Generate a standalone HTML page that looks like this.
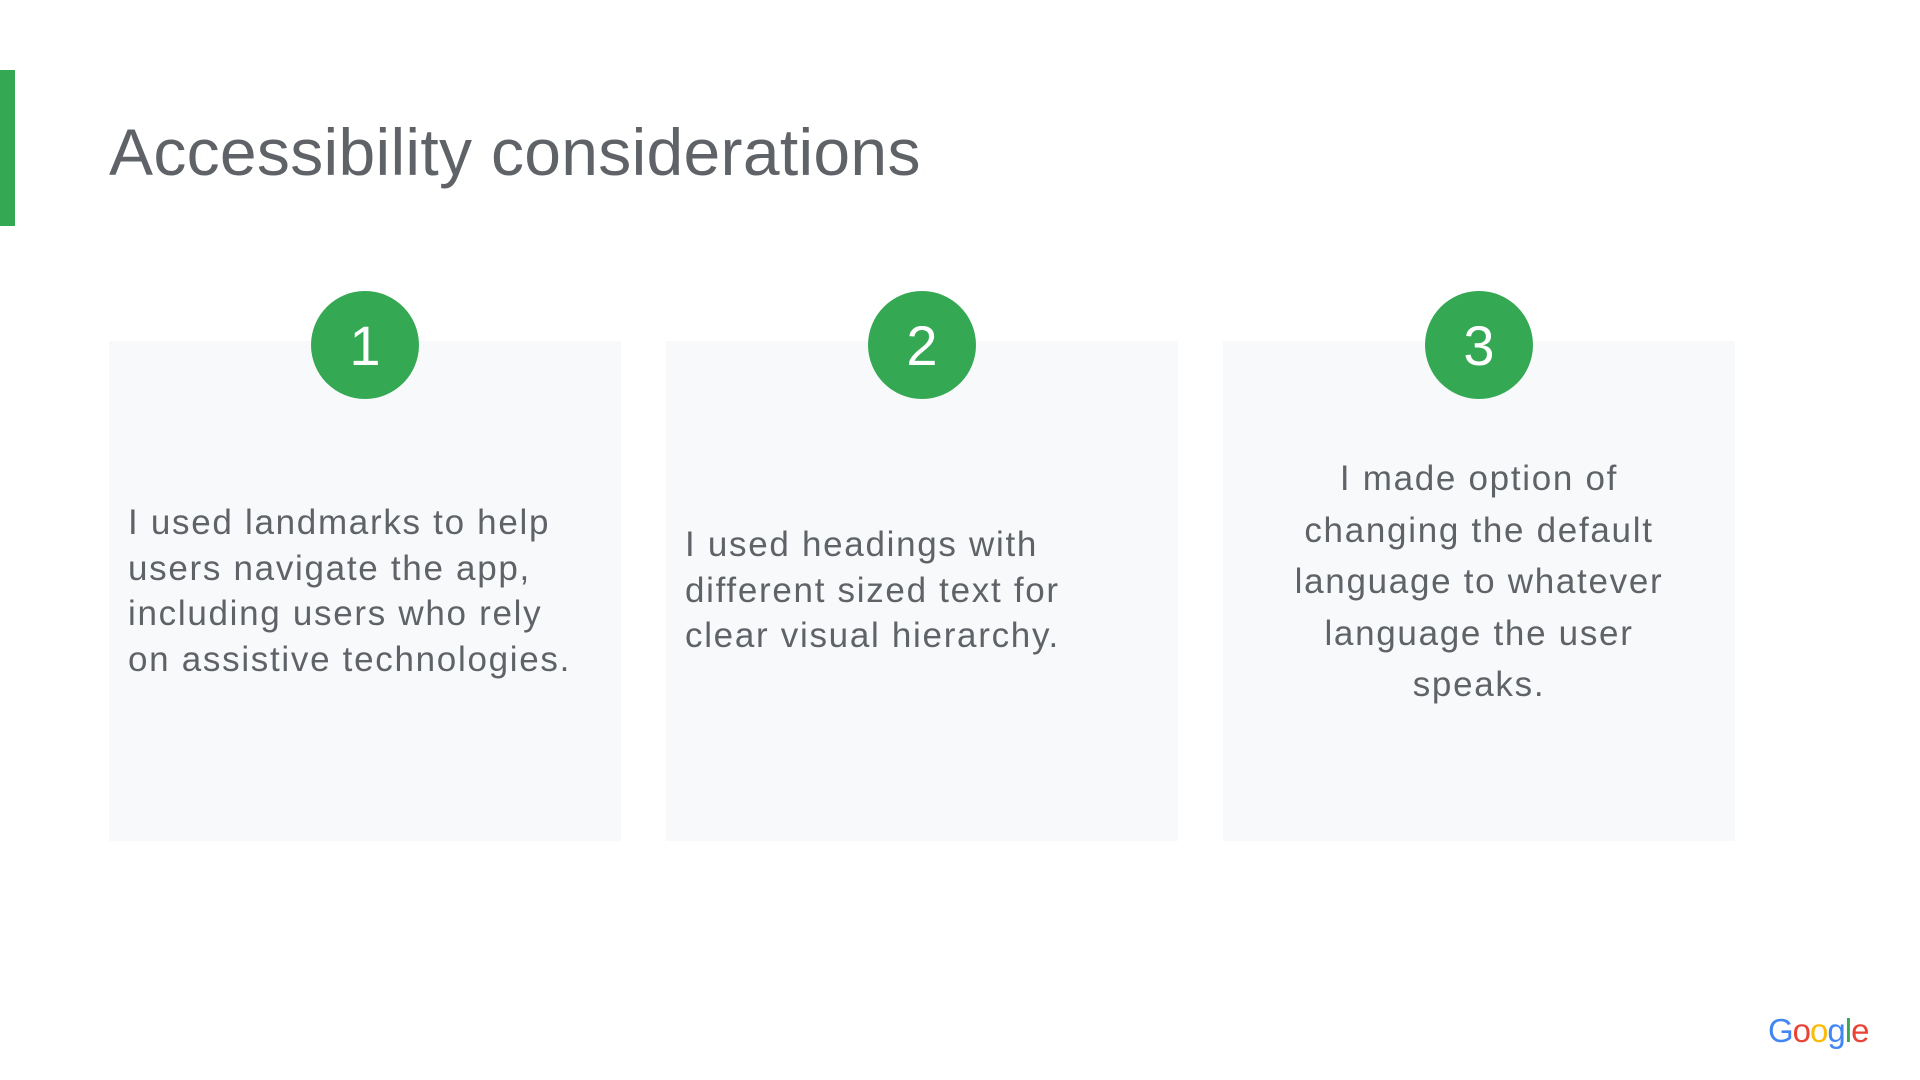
<!DOCTYPE html>
<html><head><meta charset="utf-8"><style>
html,body{margin:0;padding:0;width:1920px;height:1080px;background:#fff;overflow:hidden;font-family:"Liberation Sans",sans-serif;color:#5f6368}
.bar{position:absolute;left:0;top:70px;width:15px;height:156px;background:#34a853}
h1{position:absolute;left:109px;top:110px;margin:0;font-weight:400;font-size:66px;line-height:84px;color:#5f6368;letter-spacing:0.3px}
.card{position:absolute;top:341px;width:512px;height:500px;background:#f8f9fa}
.circ{position:absolute;top:291px;width:108px;height:108px;border-radius:50%;background:#34a853;color:#fff;font-size:56px;line-height:110px;text-align:center}
.t{position:absolute;font-size:35px;line-height:45.5px;letter-spacing:1.7px}
.g{position:absolute;left:1768px;top:1012px;font-size:33px;font-family:"Liberation Sans",sans-serif;letter-spacing:-1px}
</style></head><body>
<div class="bar"></div>
<h1>Accessibility considerations</h1>
<div class="card" style="left:109px"></div>
<div class="card" style="left:666px"></div>
<div class="card" style="left:1223px"></div>
<div class="circ" style="left:311px">1</div>
<div class="circ" style="left:868px">2</div>
<div class="circ" style="left:1425px">3</div>
<div class="t" style="left:128px;top:500px;width:490px">I used landmarks to help<br>users navigate the app,<br>including users who rely<br>on assistive technologies.</div>
<div class="t" style="left:685px;top:522px;width:490px">I used headings with<br>different sized text for<br>clear visual hierarchy.</div>
<div class="t" style="left:1223px;top:453px;width:512px;text-align:center;line-height:51.5px">I made option of<br>changing the default<br>language to whatever<br>language the user<br>speaks.</div>
<div class="g"><span style="color:#4285f4">G</span><span style="color:#ea4335">o</span><span style="color:#fbbc05">o</span><span style="color:#4285f4">g</span><span style="color:#34a853">l</span><span style="color:#ea4335">e</span></div>
</body></html>
